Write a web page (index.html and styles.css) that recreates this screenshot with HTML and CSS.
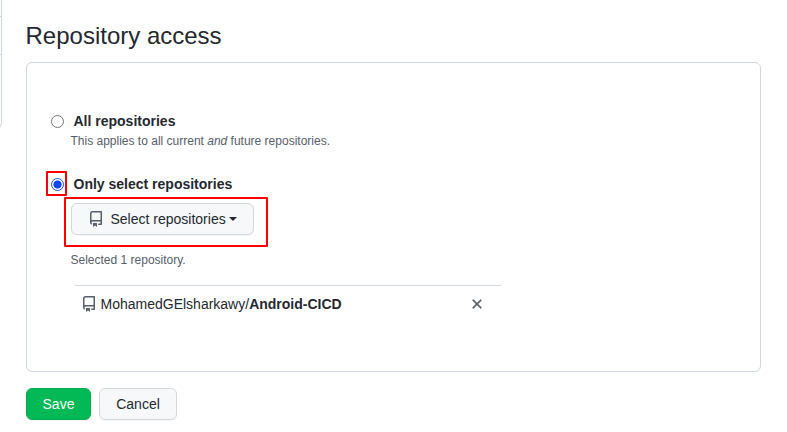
FILE: index.html
```html
<!DOCTYPE html>
<html lang="en">
<head>
<meta charset="utf-8">
<title>Repository access</title>
<link rel="stylesheet" href="styles.css">
</head>
<body>
<div class="page">
  <aside class="menu"><div class="menu-item menu-item-first"></div><div class="menu-item"></div><div class="menu-item menu-item-last"></div></aside>
  <main class="content">
    <h2 class="title">Repository access</h2>
    <section class="box">
      <label class="option"><span class="radio"></span>All repositories</label>
      <p class="note">This applies to all current <em>and</em> future repositories.</p>
      <label class="option option-select"><span class="radio radio-checked"><span class="mark mark-radio"></span></span>Only select repositories</label>
      <div class="picker">
        <button class="btn btn-select" type="button">
          <svg class="icon" viewBox="0 0 16 16"><path fill-rule="evenodd" d="M2 2.5A2.5 2.5 0 014.500 0h8.750a.75.75 0 01.75.75v12.500a.75.75 0 01-.75.75h-2.500a.75.75 0 110-1.500h1.750v-2h-8a1 1 0 00-.714 1.700.75.75 0 01-1.072 1.050A2.495 2.495 0 012 11.500v-9zm10.500-1V9h-8c-.356 0-.694.074-1 .208V2.500a1 1 0 011-1h8zM5 12.250v3.250a.25.25 0 00.400.200l1.450-1.087a.25.25 0 01.300 0L8.600 15.700a.25.25 0 00.400-.200v-3.250a.25.25 0 00-.25-.25h-3.500a.25.25 0 00-.25.25z"/></svg>
          <span class="btn-label">Select repositories</span><span class="caret"></span>
        </button>
        <span class="mark mark-picker"></span>
      </div>
      <p class="note note-selected">Selected 1 repository.</p>
      <div class="repo">
        <svg class="icon" viewBox="0 0 16 16"><path fill-rule="evenodd" d="M2 2.5A2.5 2.5 0 014.500 0h8.750a.75.75 0 01.75.75v12.500a.75.75 0 01-.75.75h-2.500a.75.75 0 110-1.500h1.750v-2h-8a1 1 0 00-.714 1.700.75.75 0 01-1.072 1.050A2.495 2.495 0 012 11.500v-9zm10.500-1V9h-8c-.356 0-.694.074-1 .208V2.500a1 1 0 011-1h8zM5 12.250v3.250a.25.25 0 00.400.200l1.450-1.087a.25.25 0 01.300 0L8.600 15.700a.25.25 0 00.400-.200v-3.250a.25.25 0 00-.25-.25h-3.500a.25.25 0 00-.25.25z"/></svg>
        <span class="repo-name">MohamedGElsharkawy/<strong>Android-CICD</strong></span>
        <svg class="icon icon-remove" viewBox="0 0 16 16"><path fill-rule="evenodd" d="M3.720 3.720a.75.75 0 011.060 0L8 6.940l3.220-3.220a.75.75 0 111.060 1.060L9.060 8l3.220 3.220a.75.75 0 11-1.060 1.060L8 9.060l-3.220 3.220a.75.75 0 01-1.060-1.060L6.940 8 3.720 4.780a.75.75 0 010-1.060z"/></svg>
      </div>
    </section>
    <div class="actions"><button class="btn btn-save" type="button">Save</button><button class="btn btn-cancel" type="button">Cancel</button></div>
  </main>
</div>
</body>
</html>
```
FILE: styles.css
```css
* { box-sizing: border-box; }
body {
  margin: 0;
  background: #fff;
  color: #24292f;
  font: 14px/21px "Liberation Sans", Arial, sans-serif;
}
.page { display: flex; height: 432px; overflow: hidden; }
.menu {
  flex: none;
  width: 20px;
  height: 129px;
  margin-left: -18px;
  border: 1px solid #d0d7de;
  border-top: 0;
  border-bottom-right-radius: 6px;
  overflow: hidden;
}
.menu-item { height: 38px; border-bottom: 1px solid #d0d7de; }
.menu-item-first { height: 17px; }
.menu-item-last { border: 0; }
.content { flex: none; width: 735px; margin-left: 23.5px; }
.title { margin: 18px 0 8px; font-size: 24px; font-weight: 400; line-height: 36px; }
.box {
  height: 310px;
  padding: 48px 24px 0;
  border: 1px solid #d0d7de;
  border-radius: 6px;
}
.option { display: flex; align-items: center; gap: 10px; height: 21px; font-weight: 700; }
.option-select { margin-top: 24px; }
.radio {
  position: relative;
  width: 13px;
  height: 13px;
  border: 1px solid #767676;
  border-radius: 50%;
}
.radio-checked {
  border-color: #1a56f5;
  background: radial-gradient(circle, #0d47ff 3.700px, #fff 4.400px);
}
.note { margin: 0 0 0 20px; color: #57606a; font-size: 12px; line-height: 18px; }
.mark { position: absolute; border: 2px solid #f00; border-radius: 1px; }
.mark-radio { left: -6px; top: -8px; width: 21px; height: 25px; }
.mark-picker { left: -7px; top: -6px; width: 204px; height: 50px; }
.picker { position: relative; width: 183px; margin: 8px 0 0 20px; }
.btn {
  height: 32px;
  padding: 0;
  border: 1px solid #d5d8da;
  border-radius: 6px;
  background: #f6f8fa;
  box-shadow: 0 1px 0 rgba(27, 31, 36, 0.040);
  color: #24292f;
  font: 14px/20px "Liberation Sans", Arial, sans-serif;
}
.btn-select { display: flex; align-items: center; width: 183px; padding-left: 16px; }
.btn-label { margin-left: 7px; }
.caret { margin-left: 3px; border: 4px solid transparent; border-top-color: #24292f; border-bottom: 0; }
.icon { flex: none; width: 16px; height: 16px; fill: #57606a; }
.note-selected { margin-top: 16px; }
.repo {
  display: flex;
  align-items: flex-start;
  width: 426px;
  height: 38px;
  margin: 16px 0 0 24px;
  padding: 8px 16px 0 6px;
  border-top: 1px solid #d0d7de;
}
.repo .icon { margin-top: 2px; }
.icon-remove { stroke: #57606a; stroke-width: 0.300px; }
.repo-name { flex: 1; margin-left: 4px; }
.actions { display: flex; gap: 8px; margin-top: 16px; }
.btn-save { width: 65px; padding-left: 1px; border-color: #06ac50; background: #02b955; color: #fff; }
.btn-cancel { width: 78px; padding-left: 1px; }
```
